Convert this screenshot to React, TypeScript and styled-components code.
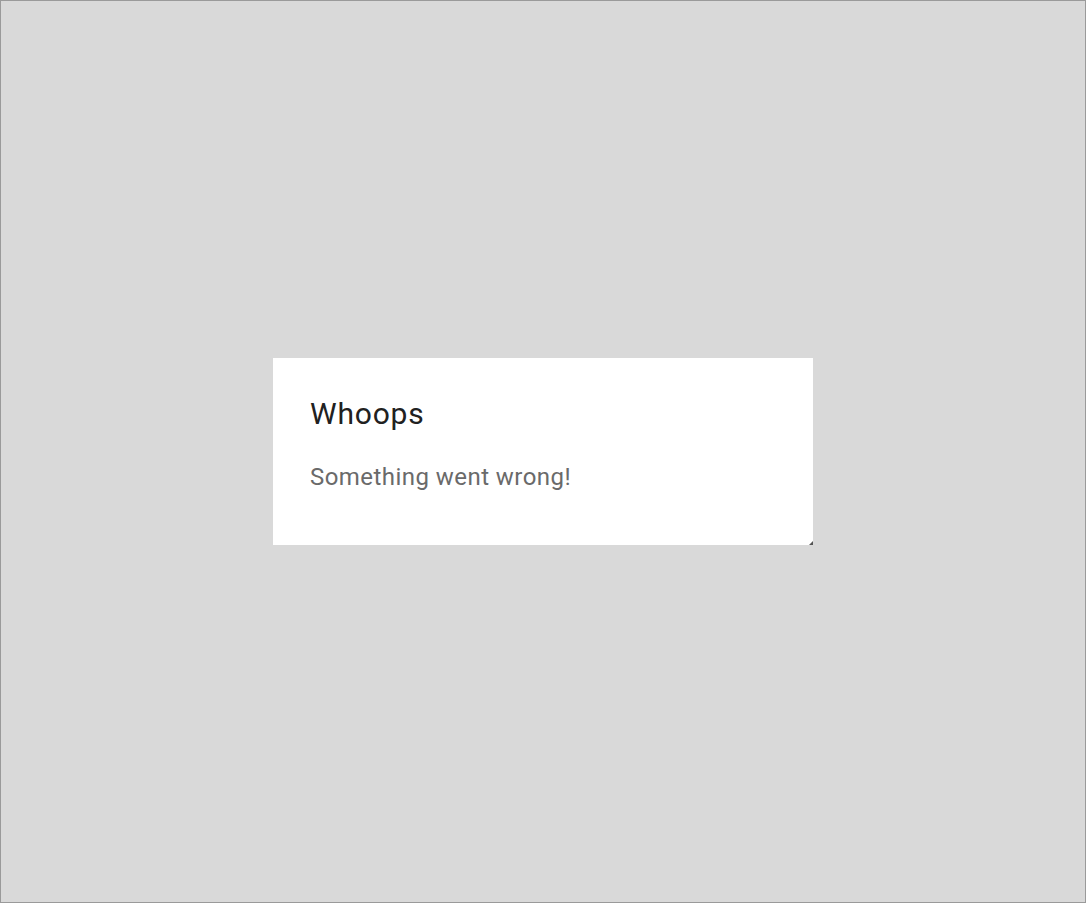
import React from "react";
import styled, { createGlobalStyle } from "styled-components";

const Global = createGlobalStyle`
  html, body { margin: 0; padding: 0; }
  body { font-family: Roboto, "Noto Sans", sans-serif; }
  * { box-sizing: border-box; }
`;

const Screen = styled.div`
  height: 100vh;
  border: 1px solid #9a9a9a;
  background: #d9d9d9;
  display: flex;
  align-items: center;
  justify-content: center;
`;

const Dialog = styled.div`
  position: relative;
  width: 540px;
  height: 187px;
  background: #ffffff;
  padding: 32px 37px 0;
  display: flex;
  flex-direction: column;
`;

const Grip = styled.span`
  position: absolute;
  right: 0;
  bottom: 0;
  width: 0;
  height: 0;
  border-left: 4px solid transparent;
  border-bottom: 4px solid #555555;
`;

const Title = styled.h2`
  margin: 0;
  font-family: Roboto, sans-serif;
  font-weight: 400;
  font-size: 30px;
  line-height: 48px;
  letter-spacing: 0.8px;
  color: #212121;
`;

const Message = styled.p`
  margin: 21px 0 0;
  font-family: Roboto, sans-serif;
  font-weight: 400;
  font-size: 24px;
  line-height: 36px;
  letter-spacing: 0.45px;
  color: #6a6a6a;
`;

export default function App() {
  return (
    <>
      <Global />
      <Screen>
        <Dialog>
          <Title>Whoops</Title>
          <Message>Something went wrong!</Message>
          <Grip />
        </Dialog>
      </Screen>
    </>
  );
}
